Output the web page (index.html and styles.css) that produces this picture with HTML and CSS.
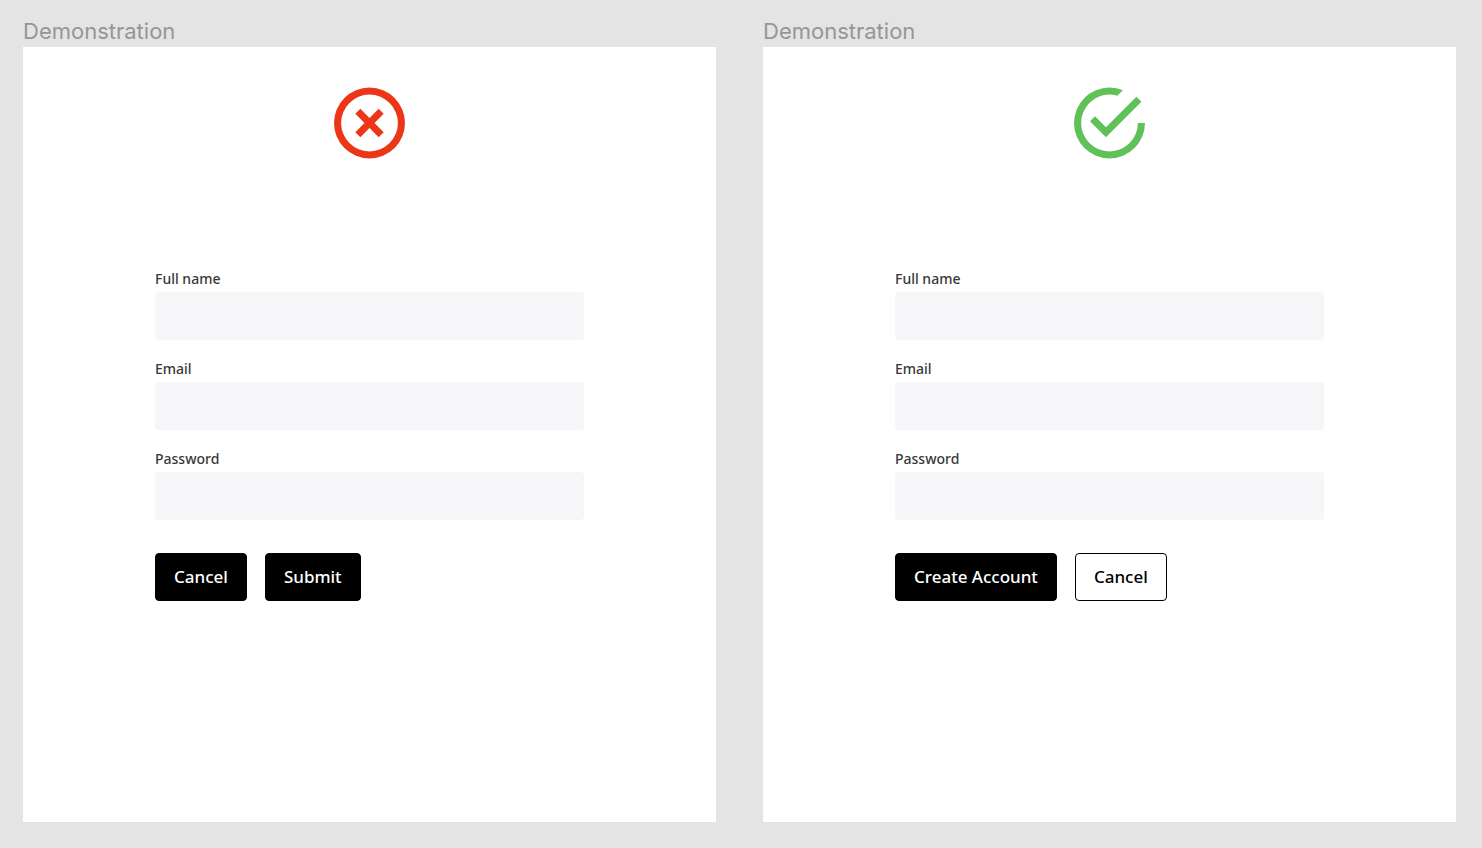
FILE: index.html
```html
<!DOCTYPE html>
<html lang="en">
<head>
<meta charset="utf-8">
<meta name="viewport" content="width=device-width, initial-scale=1">
<title>Button labels demonstration</title>
<link rel="stylesheet" href="styles.css">
</head>
<body>
<main class="board">
  <section class="demo">
    <h2 class="demo-title">Demonstration</h2>
    <div class="frame">
      <svg class="verdict verdict-bad" viewBox="2 2 20 20" aria-hidden="true"><path d="M12 2a10 10 0 1 0 0 20 10 10 0 0 0 0-20zm0 18a8 8 0 1 1 0-16 8 8 0 0 1 0 16zM14.59 8 12 10.59 9.41 8 8 9.41 10.59 12 8 14.59 9.41 16 12 13.41 14.59 16 16 14.59 13.41 12 16 9.41z"/></svg>
      <form class="form">
        <div class="field"><label for="name-a">Full name</label><input id="name-a" type="text"></div>
        <div class="field"><label for="email-a">Email</label><input id="email-a" type="email"></div>
        <div class="field"><label for="password-a">Password</label><input id="password-a" type="password"></div>
        <div class="actions">
          <button class="button" type="button">Cancel</button>
          <button class="button" type="button">Submit</button>
        </div>
      </form>
    </div>
  </section>
  <section class="demo">
    <h2 class="demo-title">Demonstration</h2>
    <div class="frame">
      <svg class="verdict verdict-good" viewBox="2 2 20 20" aria-hidden="true"><path d="M20 12a8 8 0 1 1-8-8c.76 0 1.5.11 2.2.31l1.57-1.57A9.82 9.82 0 0 0 12 2a10 10 0 1 0 10 10zM7.91 10.08 6.5 11.5 11 16 21 6l-1.41-1.42L11 13.17z"/></svg>
      <form class="form">
        <div class="field"><label for="name-b">Full name</label><input id="name-b" type="text"></div>
        <div class="field"><label for="email-b">Email</label><input id="email-b" type="email"></div>
        <div class="field"><label for="password-b">Password</label><input id="password-b" type="password"></div>
        <div class="actions">
          <button class="button" type="button">Create Account</button>
          <button class="button button-outline" type="button">Cancel</button>
        </div>
      </form>
    </div>
  </section>
</main>
</body>
</html>
```
FILE: styles.css
```css
* {
  box-sizing: border-box;
}

body {
  margin: 0;
  background: #e4e4e4;
  font-family: "Noto Sans", "Open Sans", sans-serif;
}

.board {
  display: grid;
  grid-template-columns: 1fr 1fr;
  gap: 47px;
  min-height: 100vh;
  padding: 16px 26px 26px 23px;
}

.demo {
  display: flex;
  flex-direction: column;
}

.demo-title {
  margin: 0;
  color: #969696;
  font: 400 22px/31px Inter, sans-serif;
}

.frame {
  display: flex;
  flex: 1;
  flex-direction: column;
  padding: 40px 132px;
  background: #fff;
}

.verdict {
  display: block;
  width: 71px;
  height: 72px;
  margin: 0 auto 110px;
}

.verdict-bad {
  fill: #ed3617;
}

.verdict-good {
  fill: #60c158;
}

.form {
  display: flex;
  flex-direction: column;
  gap: 19px;
}

.field {
  display: flex;
  flex-direction: column;
  gap: 3px;
}

.field label {
  color: #38383b;
  font-size: 14px;
  font-weight: 500;
  line-height: 20px;
}

.field input {
  width: 100%;
  height: 48px;
  padding: 0 16px;
  border: 0;
  border-radius: 4px;
  background: #f6f6f9;
  font: inherit;
}

.actions {
  display: flex;
  gap: 18px;
  margin-top: 14px;
}

.button {
  height: 48px;
  padding: 0 18px;
  border: 1px solid #000;
  border-radius: 4px;
  background: #000;
  color: #fff;
  font: 500 17px/24px "Noto Sans", "Open Sans", sans-serif;
}

.button-outline {
  background: #fff;
  color: #000;
}
```
